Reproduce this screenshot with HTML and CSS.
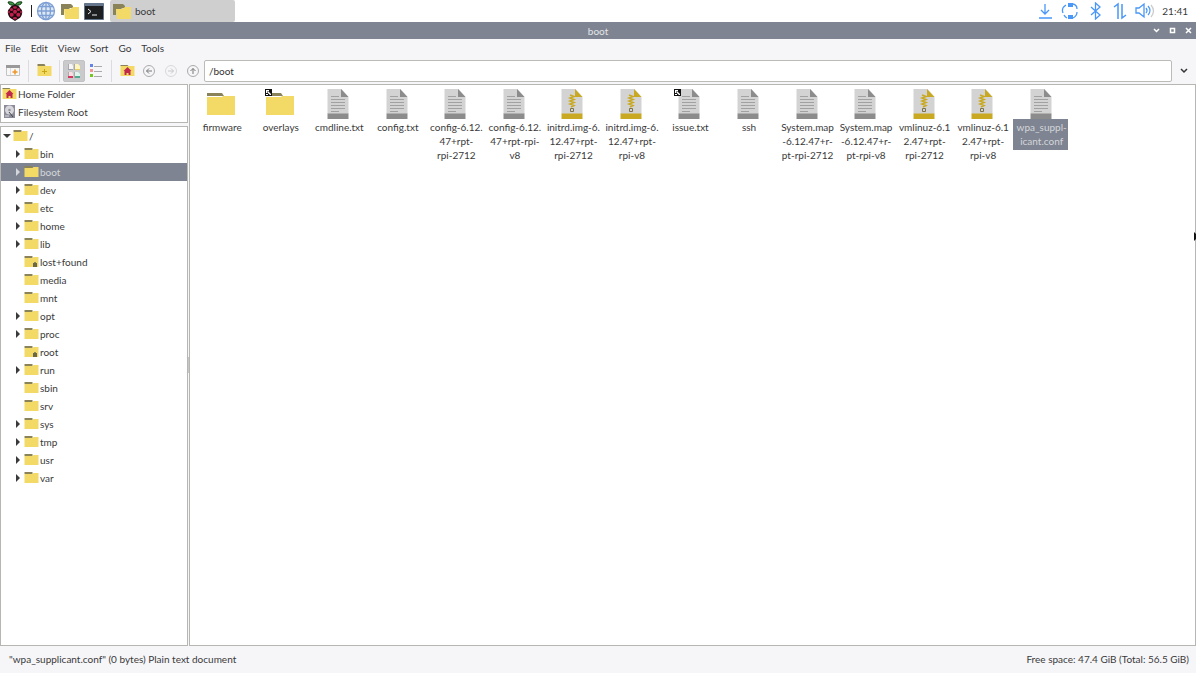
FILE: index.html
```
<!DOCTYPE html>
<html lang="en">

<head>
  <meta charset="utf-8">
  <title>boot</title>
  <link rel="stylesheet" href="styles.css">
</head>

<body>
  <!-- shared icons -->
  <svg class="defs" aria-hidden="true">
    <symbol id="folder" viewBox="0 0 30 24">
      <path d="M1 1h15l2 3H1z" fill="#8a8259"/>
      <path d="M1 5h15l1-1h12v19H1z" fill="#f3da66"/>
    </symbol>
    <symbol id="folder-s" viewBox="0 0 15 12">
      <path d="M0.500 0h8v2h-8z" fill="#8a8259"/>
      <path d="M0.500 2h8l1-1h5v10h-14z" fill="#f3da66"/>
    </symbol>
    <symbol id="folder-lock" viewBox="0 0 15 12">
      <use href="#folder-s" width="15" height="12"/>
      <path d="M9 7h4v4H9z" fill="#6b6749"/>
      <path d="M10 7q1-2 2 0" fill="none" stroke="#8a8459"/>
    </symbol>
    <symbol id="folder-top" viewBox="0 0 20 17">
      <path d="M1 1h10l2 2v2h-3l-1 1H4v6H1z" fill="#8a8259"/>
      <path d="M4 6h6l3-2h6v12H5z" fill="#f3da66"/>
    </symbol>
    <symbol id="folder-home" viewBox="0 0 15 13">
      <path d="M0.500 1h7l1 1h-8z" fill="#8a8259"/>
      <path d="M0.500 2h14v10h-14z" fill="#f3da66"/>
      <path d="M7.500 3l4 4h-1v4h-2V9h-2v2h-2V7h-1z" fill="#c0284c"/>
    </symbol>
    <symbol id="text" viewBox="0 0 22 30">
      <path d="M0.500 0h14l7 8v17h-21z" fill="#d3d3d3"/>
      <path d="M14 0l7.500 8H14z" fill="#8c8c8c"/>
      <path d="M0.500 24.500h21V30h-21z" fill="#8c8c8c"/>
      <path d="M4 7.500h8M4 10.500h14M4 13.500h14M4 16.500h14M4 19.500h14M4 22.500h8" stroke="#a1a1a1"/>
    </symbol>
    <symbol id="archive" viewBox="0 0 22 30">
      <path d="M0.500 0h14l7 8v17h-21z" fill="#d3d3d3"/>
      <path d="M14 0l7.500 8H14z" fill="#c9a922"/>
      <path d="M0.500 24.500h21V30h-21z" fill="#c9a922"/>
      <path d="M9 6l4 1.500-4 1.500 4 1.500-4 1.500 4 1.500-4 1.500 4 1.500-3 1.500" fill="none" stroke="#c9a922" stroke-width="1.500"/>
      <path d="M9.500 19.500h3v3h-3z" fill="none" stroke="#7d734b"/>
    </symbol>
    <symbol id="link" viewBox="0 0 7 7">
      <path d="M0 0h7v7H0z" fill="#111"/>
      <path d="M1 1h3v1H2v2H1zM3 2l3 3v1H5L2 3zM1 5h2v1H1z" fill="#fff"/>
    </symbol>
  </svg>

  <header class="panel">
    <button class="panel-item" aria-label="Menu">
      <svg width="18" height="22" viewBox="0 0 18 22">
        <path d="M9 5Q3 6 2 2q5-1 7 3zM9 5q6 1 7-3-5-1-7 3z" fill="#3c9a3f" stroke="#16351a"/>
        <path d="M9 5q4 0 5 3 3 2 2 6-1 4-4 5l-3 2-3-2q-3-1-4-5-1-4 2-6 1-3 5-3z" fill="#1b0b10"/>
        <g fill="#c3204c">
          <ellipse cx="9" cy="7.500" rx="2" ry="1.200"/>
          <circle cx="5.500" cy="9.500" r="1.600"/>
          <circle cx="12.500" cy="9.500" r="1.600"/>
          <circle cx="9" cy="11.700" r="2"/>
          <circle cx="5.700" cy="14.700" r="2"/>
          <circle cx="12.300" cy="14.700" r="2"/>
          <ellipse cx="3" cy="12" rx="0.800" ry="1.600"/>
          <ellipse cx="15" cy="12" rx="0.800" ry="1.600"/>
          <ellipse cx="9" cy="18.200" rx="2" ry="1.300"/>
        </g>
      </svg>
    </button>
    <span class="panel-sep"></span>
    <button class="panel-item" aria-label="Web Browser">
      <svg width="20" height="20" viewBox="0 0 20 20" fill="#dde9f7" stroke="#7d9fd3" stroke-width="1.300">
        <circle cx="10" cy="10" r="8.500"/>
        <ellipse cx="10" cy="10" rx="4.500" ry="8.500"/>
        <path d="M10 1v18M1 10h18M3 5.500h14M3 14.500h14" fill="none"/>
      </svg>
    </button>
    <button class="panel-item" aria-label="File Manager"><svg width="20" height="17"><use href="#folder-top"/></svg></button>
    <button class="panel-item" aria-label="Terminal">
      <svg width="20" height="17" viewBox="0 0 20 17">
        <path d="M0.500 0.500h19v16H0.500z" fill="#1c1e20" stroke="#65758b"/>
        <path d="M1 1h18v2H1z" fill="#65758b"/>
        <path d="M4 6l3 2.500L4 11M8 12h5" fill="none" stroke="#eee"/>
      </svg>
    </button>
    <button class="task"><svg width="20" height="17"><use href="#folder-top"/></svg>boot</button>
    <div class="tray">
      <button class="tray-item" aria-label="Updates">
        <svg width="16" height="18" viewBox="0 0 16 18" fill="none" stroke="#4a97f7" stroke-width="1.300"><path d="M8 2v10M4 8l4 4 4-4M2 16h13"/></svg>
      </button>
      <button class="tray-item" aria-label="Sync">
        <svg width="18" height="18" viewBox="0 0 18 18" fill="none" stroke="#4a97f7" stroke-width="1.300">
          <path d="M2 11Q0 6 5 3M12 2q4 1 4 5M16 10q0 4-4 6M6 16q-2-1-3-3"/>
          <path d="M7 1h5v4H7zM7 13h5v4H7z" fill="#4a97f7" stroke="none"/>
        </svg>
      </button>
      <button class="tray-item" aria-label="Bluetooth">
        <svg width="16" height="18" viewBox="0 0 16 18" fill="none" stroke="#4a97f7" stroke-width="1.300"><path d="M4 5l9 8-4.500 4V1L13 5l-9 8"/></svg>
      </button>
      <button class="tray-item" aria-label="Network">
        <svg width="16" height="18" viewBox="0 0 16 18" fill="none" stroke="#4a97f7" stroke-width="1.500"><path d="M2 5l4-3v15M14 13l-4 3V2"/></svg>
      </button>
      <button class="tray-item" aria-label="Volume">
        <svg width="20" height="18" viewBox="0 0 20 18" fill="none" stroke="#4a97f7" stroke-width="1.300">
          <path d="M1 6h3l5-4v13l-5-4H1zM11 6q2 2.500 0 5M13 4q4 4.500 0 9"/>
          <path d="M16 3q5 6 0 12" stroke="#ccc"/>
        </svg>
      </button>
      <span class="clock">21:41</span>
    </div>
  </header>

  <div class="titlebar">
    <h1>boot</h1>
    <div class="window-buttons">
      <button aria-label="Minimize"><svg width="7" height="7" viewBox="0 0 7 7"><path d="M1 2l2.500 2.500L6 2"/></svg></button>
      <button aria-label="Maximize"><svg width="7" height="7" viewBox="0 0 7 7"><path d="M1.500 1.500h4v4h-4z"/></svg></button>
      <button aria-label="Close"><svg width="7" height="7" viewBox="0 0 7 7"><path d="M1 1l5 5M6 1L1 6"/></svg></button>
    </div>
  </div>

  <nav class="menubar">
    <button>File</button>
    <button>Edit</button>
    <button>View</button>
    <button>Sort</button>
    <button>Go</button>
    <button>Tools</button>
  </nav>

  <div class="toolbar">
    <button class="tool wide" aria-label="New Window">
      <svg width="16" height="12" viewBox="0 0 16 12">
        <path d="M1.500 1.500h13v9h-13z" fill="#f7f7f7" stroke="#c4c4c4"/>
        <path d="M1 0h14v3H1z" fill="#999"/>
        <path d="M5.500 3v7" stroke="#ddd"/>
        <path d="M10 4.500v5M7.500 7h5" stroke="#ee9428" stroke-width="1.500"/>
      </svg>
    </button>
    <span class="tool-sep"></span>
    <button class="tool wide" aria-label="New Folder">
      <svg width="15" height="13" viewBox="0 0 15 13">
        <path d="M0.500 0h7l1 2h-8z" fill="#8a8259"/>
        <path d="M0.500 2h14v10h-14z" fill="#f3da66"/>
        <path d="M7.500 5v5M5 7.500h5" stroke="#c4a617"/>
      </svg>
    </button>
    <span class="tool-sep"></span>
    <button class="tool active" aria-label="Icon View">
      <svg width="14" height="16" viewBox="0 0 14 16">
        <path d="M2 1h3l1 2v4H2z" fill="#f5f5f8"/>
        <path d="M8 1h3l2 2v4H8z" fill="#fff6bd"/>
        <path d="M2 9h3l1 2v4H2z" fill="#fbdde3"/>
        <path d="M8 9h3l2 2v4H8z" fill="#def7ee"/>
        <path d="M1.500 1v6M7.500 1v6M1.500 9v6M7.500 9v6" stroke="#aaa"/>
        <path d="M1 6.500h5" stroke="#9aa0b0"/>
        <path d="M8 6.500h5" stroke="#e3cf62"/>
        <path d="M1 14h5" stroke="#d9365f" stroke-width="2"/>
        <path d="M8 14h5" stroke="#53a98f" stroke-width="2"/>
      </svg>
    </button>
    <button class="tool" aria-label="List View">
      <svg width="14" height="14" viewBox="0 0 14 14">
        <path d="M1 0h3v3H1z" fill="#6384e6"/>
        <path d="M1 5h3v3H1z" fill="#f09494"/>
        <path d="M1 10h3v3H1z" fill="#76c520"/>
        <path d="M5 2.500h8M5 7.500h8M5 12.500h8" stroke="#aaa"/>
      </svg>
    </button>
    <span class="tool-sep last"></span>
    <button class="tool" aria-label="Home"><svg width="15" height="13"><use href="#folder-home"/></svg></button>
    <button class="tool" aria-label="Back">
      <svg width="12" height="12" viewBox="0 0 12 12" fill="none" stroke="#777"><circle cx="6" cy="6" r="5.500" stroke="#aaa"/><path d="M9 6H3.500M6 3.500L3.500 6 6 8.500"/></svg>
    </button>
    <button class="tool" aria-label="Forward" disabled>
      <svg width="12" height="12" viewBox="0 0 12 12" fill="none" stroke="#c8c8c8"><circle cx="6" cy="6" r="5.500" stroke="#d8d8d8"/><path d="M3 6h5.500M6 3.500L8.500 6 6 8.500"/></svg>
    </button>
    <button class="tool" aria-label="Up">
      <svg width="12" height="12" viewBox="0 0 12 12" fill="none" stroke="#777"><circle cx="6" cy="6" r="5.500" stroke="#aaa"/><path d="M6 9V3.500M3.500 6L6 3.500 8.500 6"/></svg>
    </button>
    <input class="path" type="text" value="/boot" aria-label="Location">
    <button class="tool history" aria-label="History">
      <svg width="8" height="6" viewBox="0 0 8 6" fill="none" stroke="#333" stroke-width="1.500"><path d="M1 1l3 3 3-3"/></svg>
    </button>
  </div>

  <main>
    <aside>
      <ul class="places">
        <li><svg width="15" height="13"><use href="#folder-home"/></svg><a href="#">Home Folder</a></li>
        <li>
          <svg width="15" height="15" viewBox="0 0 15 15">
            <path d="M2 1h11v13H2z" fill="#8b8b99"/>
            <circle cx="7.500" cy="6" r="4.500" fill="#d6d6dc"/>
            <circle cx="7.500" cy="6" r="1.300" fill="#999"/>
            <path d="M7 8l4 5" stroke="#444"/>
            <path d="M3 12h4" stroke="#ddd"/>
          </svg>
          <a href="#">Filesystem Root</a>
        </li>
      </ul>
      <ul class="tree">
        <li class="root"><button class="toggle open" aria-label="Collapse"></button><svg><use href="#folder-s"/></svg><a href="#">/</a></li>
        <li><button class="toggle" aria-label="Expand"></button><svg><use href="#folder-s"/></svg><a href="#">bin</a></li>
        <li class="selected"><button class="toggle" aria-label="Expand"></button><svg><use href="#folder-s"/></svg><a href="#">boot</a></li>
        <li><button class="toggle" aria-label="Expand"></button><svg><use href="#folder-s"/></svg><a href="#">dev</a></li>
        <li><button class="toggle" aria-label="Expand"></button><svg><use href="#folder-s"/></svg><a href="#">etc</a></li>
        <li><button class="toggle" aria-label="Expand"></button><svg><use href="#folder-s"/></svg><a href="#">home</a></li>
        <li><button class="toggle" aria-label="Expand"></button><svg><use href="#folder-s"/></svg><a href="#">lib</a></li>
        <li class="leaf"><svg><use href="#folder-lock"/></svg><a href="#">lost+found</a></li>
        <li class="leaf"><svg><use href="#folder-s"/></svg><a href="#">media</a></li>
        <li class="leaf"><svg><use href="#folder-s"/></svg><a href="#">mnt</a></li>
        <li><button class="toggle" aria-label="Expand"></button><svg><use href="#folder-s"/></svg><a href="#">opt</a></li>
        <li><button class="toggle" aria-label="Expand"></button><svg><use href="#folder-s"/></svg><a href="#">proc</a></li>
        <li class="leaf"><svg><use href="#folder-lock"/></svg><a href="#">root</a></li>
        <li><button class="toggle" aria-label="Expand"></button><svg><use href="#folder-s"/></svg><a href="#">run</a></li>
        <li class="leaf"><svg><use href="#folder-s"/></svg><a href="#">sbin</a></li>
        <li class="leaf"><svg><use href="#folder-s"/></svg><a href="#">srv</a></li>
        <li><button class="toggle" aria-label="Expand"></button><svg><use href="#folder-s"/></svg><a href="#">sys</a></li>
        <li><button class="toggle" aria-label="Expand"></button><svg><use href="#folder-s"/></svg><a href="#">tmp</a></li>
        <li><button class="toggle" aria-label="Expand"></button><svg><use href="#folder-s"/></svg><a href="#">usr</a></li>
        <li><button class="toggle" aria-label="Expand"></button><svg><use href="#folder-s"/></svg><a href="#">var</a></li>
      </ul>
      <span class="grip"></span>
    </aside>

    <section class="files">
      <a class="file" href="#"><svg class="icon"><use href="#folder"/></svg><span>firmware</span></a>
      <a class="file" href="#"><svg class="icon"><use href="#folder"/></svg><svg class="emblem"><use href="#link"/></svg><span>overlays</span></a>
      <a class="file" href="#"><svg class="icon"><use href="#text"/></svg><span>cmdline.txt</span></a>
      <a class="file" href="#"><svg class="icon"><use href="#text"/></svg><span>config.txt</span></a>
      <a class="file" href="#"><svg class="icon"><use href="#text"/></svg><span>config-6.12.<br>47+rpt-<br>rpi-2712</span></a>
      <a class="file" href="#"><svg class="icon"><use href="#text"/></svg><span>config-6.12.<br>47+rpt-rpi-<br>v8</span></a>
      <a class="file" href="#"><svg class="icon"><use href="#archive"/></svg><span>initrd.img-6.<br>12.47+rpt-<br>rpi-2712</span></a>
      <a class="file" href="#"><svg class="icon"><use href="#archive"/></svg><span>initrd.img-6.<br>12.47+rpt-<br>rpi-v8</span></a>
      <a class="file" href="#"><svg class="icon"><use href="#text"/></svg><svg class="emblem"><use href="#link"/></svg><span>issue.txt</span></a>
      <a class="file" href="#"><svg class="icon"><use href="#text"/></svg><span>ssh</span></a>
      <a class="file" href="#"><svg class="icon"><use href="#text"/></svg><span>System.map<br>-6.12.47+r-<br>pt-rpi-2712</span></a>
      <a class="file" href="#"><svg class="icon"><use href="#text"/></svg><span>System.map<br>-6.12.47+r-<br>pt-rpi-v8</span></a>
      <a class="file" href="#"><svg class="icon"><use href="#archive"/></svg><span>vmlinuz-6.1<br>2.47+rpt-<br>rpi-2712</span></a>
      <a class="file" href="#"><svg class="icon"><use href="#archive"/></svg><span>vmlinuz-6.1<br>2.47+rpt-<br>rpi-v8</span></a>
      <a class="file selected" href="#"><svg class="icon"><use href="#text"/></svg><span>wpa_suppl-<br>icant.conf</span></a>
    </section>
  </main>

  <footer>
    <span>"wpa_supplicant.conf" (0 bytes) Plain text document</span>
    <span>Free space: 47.4 GiB (Total: 56.5 GiB)</span>
  </footer>

  <svg class="pointer" width="3" height="10" viewBox="0 0 3 10" aria-hidden="true"><path d="M1 0v9l2-2V2z" fill="#111"/></svg>
</body>

</html>
```
FILE: styles.css
```
* {
    box-sizing: border-box;
}

body {
    display: flex;
    flex-direction: column;
    height: 100vh;
    margin: 0;
    overflow: hidden;
    background-color: #f6f6f9;
    color: #3a3a3a;
    font-family: Lato, sans-serif;
    font-size: 10px;
    line-height: 14px;
}

button {
    display: flex;
    align-items: center;
    justify-content: center;
    padding: 0;
    border: 0;
    background: none;
    color: inherit;
    font: inherit;
}

a {
    color: inherit;
    text-decoration: none;
}

svg {
    flex: none;
}

ul {
    list-style-type: none;
    margin: 0;
    padding: 0;
}

.defs {
    position: absolute;
    width: 0;
    height: 0;
}

/* top panel */
.panel {
    display: flex;
    align-items: center;
    height: 22px;
    padding: 0 8px 0 3px;
    background-color: #fff;
}

.panel-item {
    width: 24px;
    height: 22px;
}

.panel-sep {
    width: 1px;
    height: 12px;
    margin: 0 2px 0 4px;
    background-color: #222;
}

.task {
    justify-content: flex-start;
    gap: 3px;
    width: 125px;
    height: 22px;
    margin-left: 4px;
    padding-left: 2px;
    border-radius: 2px;
    background-color: #cfcfcf;
}

.tray {
    display: flex;
    align-items: center;
    margin-left: auto;
}

.tray-item {
    width: 25px;
    height: 22px;
}

.clock {
    padding-left: 5px;
}

/* title bar */
.titlebar {
    display: grid;
    grid-template-columns: 1fr auto 1fr;
    align-items: center;
    height: 17px;
    background-color: #7e8491;
    color: #e4e5e8;
}

.titlebar h1 {
    grid-column: 2;
    margin: 0;
    font-size: 10px;
    font-weight: normal;
}

.window-buttons {
    display: flex;
    justify-content: flex-end;
}

.window-buttons button {
    width: 16px;
    height: 16px;
}

.window-buttons svg {
    fill: none;
    stroke: #fff;
    stroke-width: 1.5;
}

.menubar {
    display: flex;
    gap: 10px;
    padding: 2px 5px 3px;
}

/* toolbar */
.toolbar {
    display: flex;
    align-items: center;
    height: 26px;
    padding-bottom: 1px;
}

.tool {
    width: 22px;
    height: 22px;
}

.tool.wide {
    width: 26px;
}

.tool.history {
    width: 24px;
}

.tool.active {
    margin-left: 1px;
    border: 1px solid #c2c2c5;
    border-radius: 2px;
    background-color: #cacacd;
}

.tool-sep {
    width: 1px;
    height: 22px;
    margin: 0 2px;
    background-color: #dcdce0;
}

.tool-sep.last {
    margin: 0 4px;
}

.path {
    flex: 1;
    min-width: 0;
    height: 22px;
    padding: 0 4px;
    border: 1px solid #bbbbb8;
    border-radius: 2px;
    background-color: #fff;
    color: #333;
    font: inherit;
}

main {
    display: flex;
    flex: 1;
    min-height: 0;
}

/* side pane */
aside {
    position: relative;
    display: flex;
    flex-direction: column;
    gap: 3px;
    width: 188px;
    margin-right: 1px;
}

.places,
.tree {
    border: 1px solid #b6b6b3;
    background-color: #fff;
}

.places {
    padding-bottom: 1px;
}

.tree {
    flex: 1;
}

.places li,
.tree li {
    display: flex;
    align-items: center;
    height: 18px;
}

.places li {
    gap: 1px;
    padding: 0 0 1px 1px;
}

.tree li {
    padding-left: 11px;
}

.tree .root {
    padding-left: 0;
}

.tree .leaf {
    padding-left: 23px;
}

.tree svg {
    width: 15px;
    height: 12px;
    margin-right: 1px;
}

.tree .selected {
    background-color: #7e8491;
    color: #d4d6da;
}

.toggle {
    width: 12px;
    height: 18px;
}

.toggle::before {
    content: "";
    border: 4px solid transparent;
    border-right: 0;
    border-left-color: currentColor;
}

.toggle.open::before {
    border: 4px solid transparent;
    border-bottom: 0;
    border-top-color: currentColor;
}

.grip {
    position: absolute;
    top: 50%;
    right: -1px;
    height: 15px;
    border-right: 1px dotted #999;
    transform: translateY(-50%);
}

/* icon view */
.files {
    display: grid;
    flex: 1;
    grid-template-columns: repeat(auto-fill, minmax(58px, 1fr));
    align-content: start;
    padding: 4px 8px 0 2px;
    border: 1px solid #b6b6b3;
    background-color: #fff;
}

.file {
    position: relative;
    display: flex;
    flex-direction: column;
    align-items: center;
    text-align: center;
}

.file .icon {
    width: 30px;
    height: 30px;
}

.file span {
    padding: 1px 0 2px 2px;
    white-space: nowrap;
}

.file .emblem {
    position: absolute;
    top: 0;
    left: 14px;
    width: 7px;
    height: 7px;
}

.file.selected span {
    width: 55px;
    background-color: #7e8491;
    color: #d4d6da;
}

footer {
    display: flex;
    align-items: center;
    justify-content: space-between;
    height: 27px;
    padding: 0 7px 1px 9px;
}

.pointer {
    position: absolute;
    top: 232px;
    right: 0;
}
```
